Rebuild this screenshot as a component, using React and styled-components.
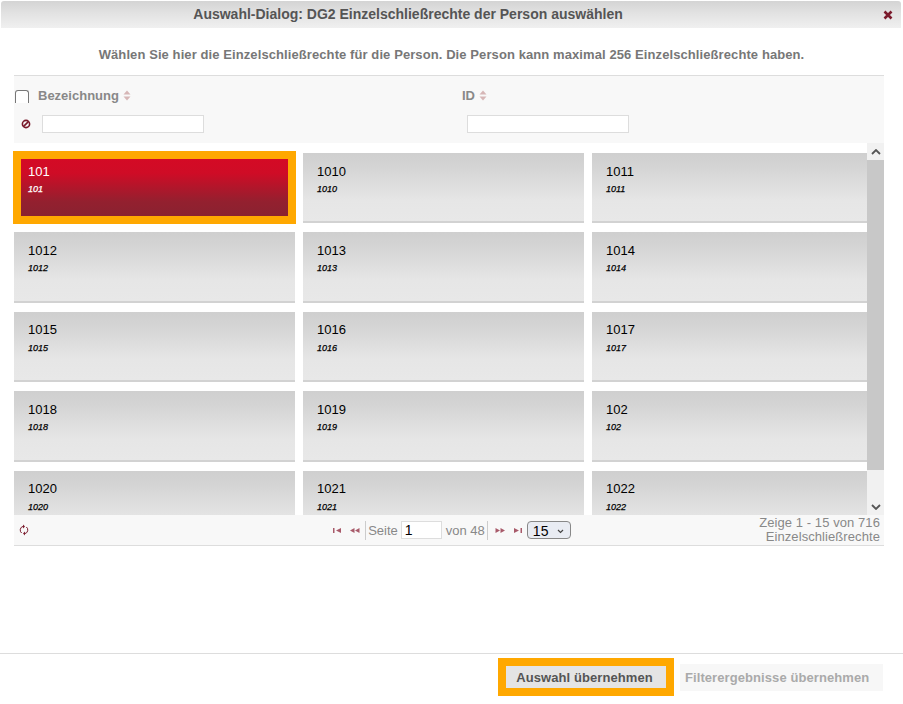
import React from "react";
import styled, { createGlobalStyle } from "styled-components";

const GlobalStyle = createGlobalStyle`
  html, body {
    margin: 0;
    padding: 0;
    background: #fff;
  }
  body {
    font-family: "Liberation Sans", Arial, sans-serif;
  }
`;

const Dialog = styled.div`
  width: 903px;
  height: 704px;
  display: flex;
  flex-direction: column;
  overflow: hidden;
  background: #fff;
`;

const TitleBar = styled.div`
  height: 27px;
  margin: 1px 2px 0 1px;
  display: flex;
  align-items: center;
  background: linear-gradient(to bottom, #d4d4d4 0%, #e2e2e2 45%, #f0f0f0 100%);
  border-radius: 3px 3px 0 0;
`;

const Title = styled.div`
  flex: 1;
  padding-bottom: 1px;
  text-align: center;
  font-size: 14px;
  font-weight: bold;
  color: #555;
`;

const CloseSlot = styled.div`
  width: 86px;
  display: flex;
  justify-content: flex-end;
  padding-right: 8px;
  box-sizing: border-box;
`;

const Intro = styled.p`
  margin: 0;
  height: 47px;
  box-sizing: border-box;
  padding-top: 19px;
  text-align: center;
  font-size: 13px;
  font-weight: bold;
  letter-spacing: 0.09px;
  line-height: 15px;
  color: #777;
`;

const Table = styled.div`
  margin: 0 19px 0 14px;
  width: 870px;
`;

const FilterHead = styled.div`
  height: 68px;
  display: grid;
  grid-template-columns: 448px 1fr;
  box-sizing: border-box;
  border-top: 1px solid #ddd;
  background: #f8f8f8;
`;

const FilterCol = styled.div`
  display: flex;
  flex-direction: column;
`;

const HeadRow = styled.div`
  height: 39px;
  display: flex;
  align-items: center;
  padding-bottom: 1px;
  box-sizing: border-box;
`;

const FakeCheck = styled.span`
  width: 12px;
  height: 12px;
  margin: 2px 9px 0 1px;
  background: #fff;
  border: 1px solid #777;
  border-bottom: 0;
  border-radius: 3px 3px 0 0;
`;

const HeadLabel = styled.span`
  font-size: 13px;
  font-weight: bold;
  color: #888;
`;

const FilterRow = styled.div`
  display: flex;
  align-items: center;
  padding-left: ${(props) => props.$inset}px;
`;

const FilterIcon = styled.span`
  display: flex;
  margin-right: 11px;
`;

const FilterInput = styled.input`
  width: 162px;
  height: 18px;
  box-sizing: border-box;
  padding: 0 2px;
  border: 1px solid #ddd;
  background: #fff;
  outline: 0;
`;

const Body = styled.div`
  height: 372px;
  display: flex;
`;

const Viewport = styled.div`
  width: 854px;
  height: 372px;
  margin-left: -1px;
  padding-left: 1px;
  box-sizing: border-box;
  overflow: hidden;
`;

const CardGrid = styled.div`
  display: grid;
  grid-template-columns: 281px 281px 1fr;
  grid-auto-rows: 70.4px;
  column-gap: 8px;
  row-gap: 9px;
  padding-top: 10px;
`;

const Card = styled.div`
  box-sizing: border-box;
  padding: 10.6px 14px 0 14px;
  border-bottom: 2px solid #d2d2d2;
  background: linear-gradient(to bottom, #cfcfcf 0%, #d4d4d4 20%, #e6e6e6 70%, #e8e8e8 100%);
  color: #000;
  ${(props) =>
    props.$selected &&
    `
    margin: -2px -1px -1px -1px;
    padding: 4.6px 7px 0 7px;
    border: 8px solid #ffa800;
    background: linear-gradient(to bottom, #d40a25 0%, #cf0c26 25%, #93202f 75%, #8a2230 100%);
    color: #fff;
  `}
`;

const CardName = styled.div`
  font-size: 13px;
  line-height: 16px;
`;

const CardId = styled.div`
  margin-top: 4.4px;
  font-size: 9px;
  line-height: 11px;
  font-style: italic;
  -webkit-text-stroke: 0.25px currentColor;
`;

const Scrollbar = styled.div`
  width: 17px;
  display: flex;
  flex-direction: column;
  background: #f1f1f1;
`;

const ScrollArrow = styled.div`
  height: 17px;
  display: flex;
  align-items: center;
  justify-content: center;
  background: #f1f1f1;
`;

const ScrollThumb = styled.div`
  height: 310px;
  background: #c8c8c8;
`;

const ScrollTrack = styled.div`
  flex: 1;
`;

const Pager = styled.div`
  height: 31px;
  box-sizing: border-box;
  display: grid;
  grid-template-columns: 1fr auto 1fr;
  align-items: center;
  padding: 0 4px 0 5px;
  border-bottom: 1px solid #ddd;
  background: #f8f8f8;
  font-size: 13px;
  color: #888;
`;

const PagerCenter = styled.div`
  display: flex;
  align-items: center;
  margin-left: 1px;
`;

const PagerButton = styled.span`
  width: 17px;
  display: flex;
  justify-content: center;
`;

const PagerSep = styled.span`
  width: 1px;
  height: 19px;
  margin: 0 ${(props) => (props.$wide ? 4 : 2)}px 0 2px;
  background: #ccc;
`;

const PageInput = styled.input`
  width: 41px;
  height: 18px;
  box-sizing: border-box;
  margin: 0 4px 0 3px;
  padding: 0 3px;
  border: 1px solid #ddd;
  background: #fff;
  outline: 0;
  font-family: inherit;
  font-size: 14px;
  color: #000;
`;

const FakeSelect = styled.span`
  width: 44px;
  height: 18px;
  box-sizing: border-box;
  margin-left: 1px;
  display: flex;
  align-items: center;
  justify-content: space-between;
  padding: 2px 6px 0 5px;
  border: 1px solid #888;
  border-radius: 4px;
  background: #e9ecf3;
  font-size: 14px;
  color: #000;
`;

const PagerInfo = styled.div`
  text-align: right;
  line-height: 14px;
  letter-spacing: 0.08px;
`;

const Footer = styled.div`
  margin-top: 107px;
  height: 51px;
  box-sizing: border-box;
  display: flex;
  align-items: flex-start;
  padding: 4px 0 0 498px;
  border-top: 1px solid #ddd;
`;

const ActionButton = styled.button`
  width: 203px;
  height: 27px;
  padding: 0 0 0 5px;
  border: 0;
  background: #f7f7f7;
  color: #aaa;
  font-family: inherit;
  font-size: 13px;
  font-weight: bold;
  letter-spacing: 0.08px;
  text-align: left;
  margin: 6px 0 0 6px;
  white-space: nowrap;
  ${(props) =>
    props.$primary &&
    `
    width: 176px;
    height: 38px;
    margin: 0;
    padding: 0 3px 0 0;
    border: 8px solid #ffa800;
    background: #e4e4e4;
    color: #555;
    text-align: center;
  `}
`;

const ICON_RED = "#7a1a2c";
const ICON_SOFT = "#a85a6a";

function CloseIcon() {
  return (
    <svg width="10" height="10" viewBox="0 0 10 10">
      <path d="M1.5 1.5 L8.5 8.5 M8.5 1.5 L1.5 8.5" stroke={ICON_RED} strokeWidth="2.6" />
    </svg>
  );
}

function SortIcon() {
  return (
    <svg width="8" height="11" viewBox="0 0 8 11" style={{ marginLeft: 4 }}>
      <path d="M4 0.5 L7.5 4.5 H0.5 Z M0.5 6.5 H7.5 L4 10.5 Z" fill="#d6b6b6" />
    </svg>
  );
}

function ClearIcon() {
  return (
    <svg width="10" height="10" viewBox="0 0 10 10">
      <circle cx="5" cy="5" r="3.6" fill="none" stroke={ICON_RED} strokeWidth="1.6" />
      <path d="M2.6 7.4 L7.4 2.6" stroke={ICON_RED} strokeWidth="1.6" />
    </svg>
  );
}

function RefreshIcon() {
  return (
    <svg width="10" height="12" viewBox="0 0 10 12">
      <path d="M2.6 9 A3.8 3.8 0 0 1 4 2.4 M7.4 3 A3.8 3.8 0 0 1 6 9.6" fill="none" stroke={ICON_RED} strokeWidth="1" />
      <path d="M4 0.4 L6 2.4 L4 4.4 Z M6 7.6 L4 9.6 L6 11.6 Z" fill={ICON_RED} />
    </svg>
  );
}

function PageIcon({ d }) {
  return (
    <svg width="11" height="7" viewBox="0 0 11 7">
      <path d={d} fill={ICON_SOFT} />
    </svg>
  );
}

const FIRST = "M1 1 H2.5 V6 H1 Z M9 1 V6 L4 3.5 Z";
const PREV = "M5.5 1 V6 L1 3.5 Z M10.5 1 V6 L6 3.5 Z";
const NEXT = "M0.5 1 V6 L5 3.5 Z M5.5 1 V6 L10 3.5 Z";
const LAST = "M2 1 V6 L7 3.5 Z M8.5 1 H10 V6 H8.5 Z";

const CARDS = [
  "101", "1010", "1011",
  "1012", "1013", "1014",
  "1015", "1016", "1017",
  "1018", "1019", "102",
  "1020", "1021", "1022",
];

function App() {
  return (
    <Dialog>
      <GlobalStyle />
      <TitleBar>
        <Title>Auswahl-Dialog: DG2 Einzelschließrechte der Person auswählen</Title>
        <CloseSlot>
          <CloseIcon />
        </CloseSlot>
      </TitleBar>
      <Intro>
        Wählen Sie hier die Einzelschließrechte für die Person. Die Person kann maximal 256 Einzelschließrechte haben.
      </Intro>
      <Table>
        <FilterHead>
          <FilterCol>
            <HeadRow>
              <FakeCheck />
              <HeadLabel>Bezeichnung</HeadLabel>
              <SortIcon />
            </HeadRow>
            <FilterRow $inset={7}>
              <FilterIcon>
                <ClearIcon />
              </FilterIcon>
              <FilterInput />
            </FilterRow>
          </FilterCol>
          <FilterCol>
            <HeadRow>
              <HeadLabel>ID</HeadLabel>
              <SortIcon />
            </HeadRow>
            <FilterRow $inset={5}>
              <FilterInput />
            </FilterRow>
          </FilterCol>
        </FilterHead>
        <Body>
          <Viewport>
            <CardGrid>
              {CARDS.map((id, i) => (
                <Card key={id} $selected={i === 0}>
                  <CardName>{id}</CardName>
                  <CardId>{id}</CardId>
                </Card>
              ))}
            </CardGrid>
          </Viewport>
          <Scrollbar>
            <ScrollArrow>
              <svg width="10" height="6" viewBox="0 0 10 6">
                <path d="M1 5 L5 1 L9 5" fill="none" stroke="#555" strokeWidth="1.8" />
              </svg>
            </ScrollArrow>
            <ScrollThumb />
            <ScrollTrack />
            <ScrollArrow>
              <svg width="10" height="6" viewBox="0 0 10 6">
                <path d="M1 1 L5 5 L9 1" fill="none" stroke="#555" strokeWidth="1.8" />
              </svg>
            </ScrollArrow>
          </Scrollbar>
        </Body>
        <Pager>
          <RefreshIcon />
          <PagerCenter>
            <PagerButton>
              <PageIcon d={FIRST} />
            </PagerButton>
            <PagerButton>
              <PageIcon d={PREV} />
            </PagerButton>
            <PagerSep />
            <span>Seite</span>
            <PageInput defaultValue="1" />
            <span>von 48</span>
            <PagerSep $wide />
            <PagerButton>
              <PageIcon d={NEXT} />
            </PagerButton>
            <PagerButton>
              <PageIcon d={LAST} />
            </PagerButton>
            <FakeSelect>
              15
              <svg width="7" height="5" viewBox="0 0 7 5">
                <path d="M1 1 L3.5 3.5 L6 1" fill="none" stroke="#444" strokeWidth="1.2" />
              </svg>
            </FakeSelect>
          </PagerCenter>
          <PagerInfo>
            Zeige 1 - 15 von 716
            <br />
            Einzelschließrechte
          </PagerInfo>
        </Pager>
      </Table>
      <Footer>
        <ActionButton $primary>Auswahl übernehmen</ActionButton>
        <ActionButton>Filterergebnisse übernehmen</ActionButton>
      </Footer>
    </Dialog>
  );
}

export default App;
